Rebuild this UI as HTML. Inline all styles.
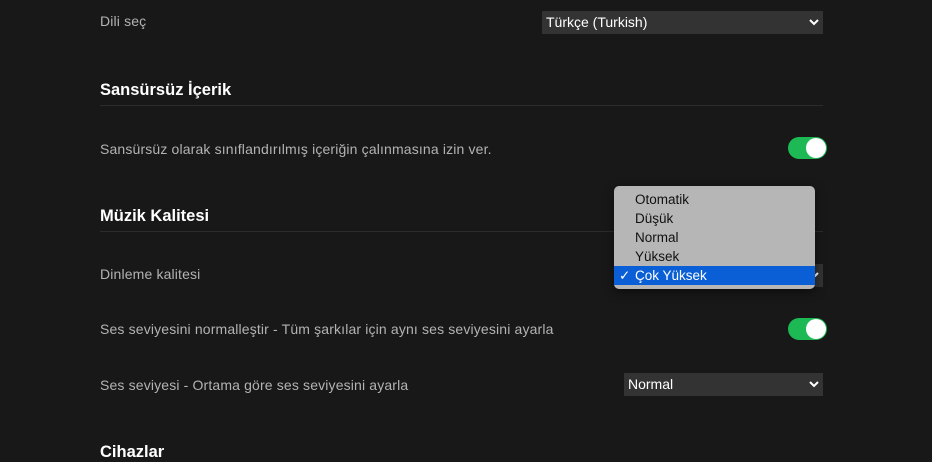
<!DOCTYPE html>
<html><head><style>
body{margin:0;width:932px;height:462px;background:#181818;font-family:"Liberation Sans",sans-serif;overflow:hidden;position:relative}
.t{position:absolute;left:100px;color:#b3b3b3;font-size:14px;line-height:16px;letter-spacing:0.15px}
.h{position:absolute;left:100px;color:#fff;font-size:16.5px;font-weight:bold;line-height:20px}
.hr{position:absolute;left:100px;width:723px;height:1px;background:#2c2c2c}
.sel{position:absolute;background:#333;color:#fff;font-size:14px;line-height:23px;height:23px;box-sizing:border-box;padding-left:4px}
.sel svg{position:absolute;right:4px;top:8px}
.tg{position:absolute;left:788px;width:39px;height:22px;border-radius:11px;background:#1db954}
.tg:after{content:"";position:absolute;right:1px;top:1px;width:20px;height:20px;border-radius:50%;background:#fff}
.dd{position:absolute;left:614px;top:186px;width:201px;height:103px;background:#b6b6b6;border-radius:5px;box-shadow:0 3px 10px rgba(0,0,0,.5);font-size:13.5px;color:#111;padding-top:4px;box-sizing:border-box}
.dd div{height:19px;line-height:19px;padding-left:21px;position:relative}
.dd .s{background:#0a5fd6;color:#fff}
</style></head><body>
<div class="t" style="top:13px">Dili seç</div>
<div class="sel" style="left:542px;top:11px;width:281px">Türkçe (Turkish)<svg width="10" height="7" viewBox="0 0 10 7"><path d="M1 1l4 4 4-4" stroke="#fff" stroke-width="2" fill="none"/></svg></div>
<div class="h" style="top:80px">Sansürsüz İçerik</div>
<div class="hr" style="top:105px"></div>
<div class="t" style="top:141px">Sansürsüz olarak sınıflandırılmış içeriğin çalınmasına izin ver.</div>
<div class="tg" style="top:137px"></div>
<div class="h" style="top:206px">Müzik Kalitesi</div>
<div class="hr" style="top:231px"></div>
<div class="t" style="top:266px">Dinleme kalitesi</div>
<div class="sel" style="left:624px;top:264px;width:199px"><svg width="10" height="7" viewBox="0 0 10 7"><path d="M1 1l4 4 4-4" stroke="#fff" stroke-width="2" fill="none"/></svg></div>
<div class="t" style="top:321px">Ses seviyesini normalleştir - Tüm şarkılar için aynı ses seviyesini ayarla</div>
<div class="tg" style="top:318px"></div>
<div class="t" style="top:377px">Ses seviyesi - Ortama göre ses seviyesini ayarla</div>
<div class="sel" style="left:624px;top:373px;width:199px">Normal<svg width="10" height="7" viewBox="0 0 10 7"><path d="M1 1l4 4 4-4" stroke="#fff" stroke-width="2" fill="none"/></svg></div>
<div class="h" style="top:442px">Cihazlar</div>
<div class="dd">
<div>Otomatik</div><div>Düşük</div><div>Normal</div><div>Yüksek</div>
<div class="s"><span style="position:absolute;left:5px">✓</span>Çok Yüksek</div>
</div>
</body></html>
